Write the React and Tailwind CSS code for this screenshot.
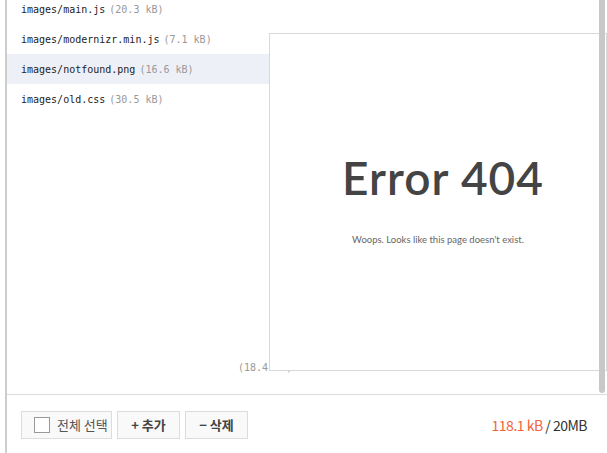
import React from 'react';

const files = [
  { name: 'images/main.js', size: '20.3 kB' },
  { name: 'images/modernizr.min.js', size: '7.1 kB' },
  { name: 'images/notfound.png', size: '16.6 kB', active: true },
  { name: 'images/old.css', size: '30.5 kB' },
];

const App = () => {
  return (
    <div className="w-[607px] h-[453px] bg-white pl-[5px] overflow-hidden font-['Noto_Sans_CJK_KR',sans-serif]">
      <div className="h-full border-l-2 border-[#cdcdcd] flex flex-col">
        {/* 파일 목록 */}
        <div className="relative h-[395px] border-b border-[#dcdcdc] overflow-hidden">
          <div className="-mt-[6px] pr-[8px]">
            {files.map((f) => (
              <div
                key={f.name}
                className={`h-[30px] flex items-center pl-[14px] gap-[4px] text-[10px] font-['DejaVu_Sans_Mono',monospace] ${f.active ? 'bg-[#eef0f8]' : ''}`}
              >
                <span className="text-[#222]">{f.name}</span>
                <span className="text-[#999]">({f.size})</span>
              </div>
            ))}
          </div>
          <div className="absolute left-[231px] top-[360px] text-[10px] font-['DejaVu_Sans_Mono',monospace] text-[#999]">(18.4 kB)</div>

          {/* 미리보기 */}
          <div className="absolute left-[262px] top-[33px] w-[338px] h-[338px] border border-[#d8d8d8] bg-white flex flex-col items-center justify-center font-['Lato',sans-serif]">
            <div className="text-[46px] leading-none font-semibold text-[#444] tracking-[1px] pl-[10px] -mt-[2px]">Error 404</div>
            <div className="text-[9.5px] text-[#666] mt-[32px]">Woops. Looks like this page doesn't exist.</div>
          </div>

          {/* 스크롤바 */}
          <div className="absolute right-[2px] top-0 w-[6px] h-[393px] bg-[#c8c8c8] rounded-b-full" />
        </div>

        {/* 하단 */}
        <div className="flex-1 flex items-center pl-[14px] pr-[20px] pt-[2px]">
          <div className="flex gap-[5px]">
            <button className="h-[28px] w-[91px] flex items-center gap-[7px] pl-[12px] bg-[#f9f9f9] border border-[#dcdcdc] text-[13px] text-[#555]">
              <span className="w-[16px] h-[16px] border border-[#999] bg-white" />
              <span>전체 선택</span>
            </button>
            <button className="h-[28px] w-[63px] flex items-center justify-center bg-[#f9f9f9] border border-[#dcdcdc] text-[13px] font-bold text-[#444]">
              + 추가
            </button>
            <button className="h-[28px] w-[63px] flex items-center justify-center bg-[#f9f9f9] border border-[#dcdcdc] text-[13px] font-bold text-[#444]">
              − 삭제
            </button>
          </div>
          <div className="ml-auto text-[14px] tracking-[-0.5px]">
            <span className="text-[#f2643c]">118.1 kB</span>
            <span className="text-[#333]"> / 20MB</span>
          </div>
        </div>
      </div>
    </div>
  );
};

export default App;
